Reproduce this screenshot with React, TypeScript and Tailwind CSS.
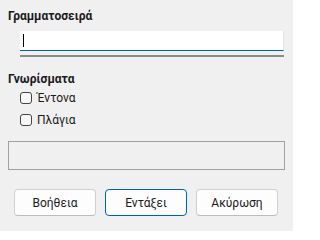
import { useState } from 'react';

export default function App() {
  const [bold, setBold] = useState(false);
  const [italic, setItalic] = useState(false);

  return (
    <div className="w-[293px] h-[231px] bg-[#f0f0f0] text-[12px] text-[#1a1a1a] font-['Roboto','Noto_Sans',sans-serif] overflow-hidden">
      {/* Font */}
      <div className="pt-[8px] pl-[8px] h-[16px] leading-[16px] font-bold box-content">Γραμματοσειρά</div>
      <div className="mt-[7px] ml-[20px] w-[264px] h-[20px] bg-white border-b border-[#005fb8] border-r border-r-[#dde6f0] flex items-center pl-[3px]">
        <div className="w-px h-[13px] bg-black" />
      </div>
      <div className="mt-[4px] ml-[20px] w-[264px] h-[2px] bg-[#8a8a8a]" />

      {/* Attributes */}
      <div className="mt-[14px] pl-[8px] h-[16px] leading-[16px] font-bold">Γνωρίσματα</div>
      <div className="mt-[5px] ml-[20px] flex flex-col gap-[10px]">
        <label className="flex items-center gap-[5px] h-[12px] leading-[12px]" onClick={() => setBold(!bold)}>
          <span className="w-[12px] h-[12px] rounded-[3px] border border-[#444] bg-[#f7f7f7]" />
          <span>Έντονα</span>
        </label>
        <label className="flex items-center gap-[5px] h-[12px] leading-[12px]" onClick={() => setItalic(!italic)}>
          <span className="w-[12px] h-[12px] rounded-[3px] border border-[#444] bg-[#f7f7f7]" />
          <span>Πλάγια</span>
        </label>
      </div>

      {/* Preview */}
      <div className="mt-[15px] ml-[8px] w-[277px] h-[29px] border border-[#a0a0a0] bg-[#f0f0f0]" />

      {/* Buttons */}
      <div className="mt-[19px] ml-[14px] flex gap-[9px]">
        <button className="w-[82px] h-[27px] rounded-[4px] bg-[#fdfdfd] border border-[#d0d0d0] border-b-[#bcbcbc]">Βοήθεια</button>
        <button className="w-[82px] h-[27px] rounded-[4px] bg-[#fdfdfd] border border-[#005fb8]">Εντάξει</button>
        <button className="w-[82px] h-[27px] rounded-[4px] bg-[#fdfdfd] border border-[#d0d0d0] border-b-[#bcbcbc]">Ακύρωση</button>
      </div>
    </div>
  );
}
